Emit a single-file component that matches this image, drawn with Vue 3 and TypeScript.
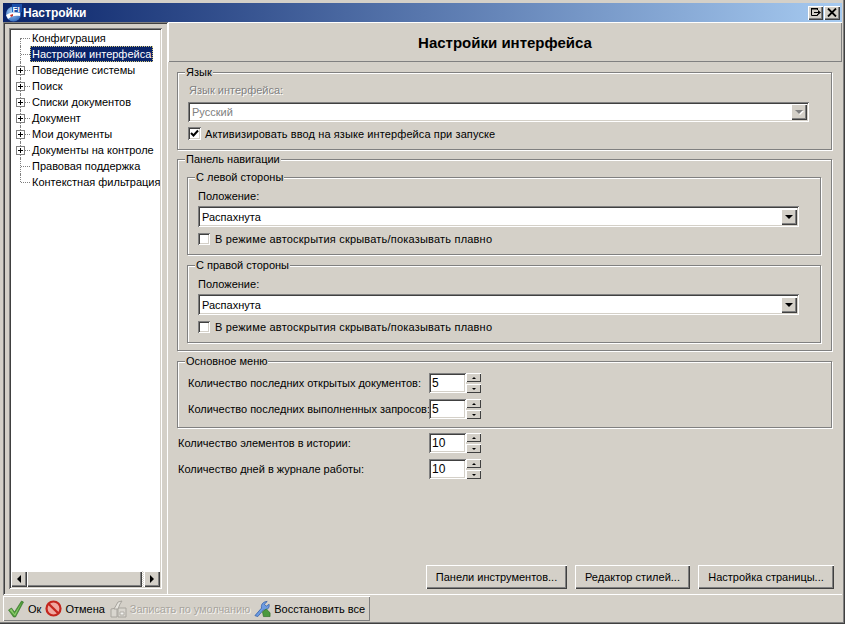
<script setup lang="ts">
interface TreeItem {
	label: string;
	expandable?: boolean;
	selected?: boolean;
}

const treeItems: TreeItem[] = [
	{ label: "Конфигурация" },
	{ label: "Настройки интерфейса", selected: true },
	{ label: "Поведение системы", expandable: true },
	{ label: "Поиск", expandable: true },
	{ label: "Списки документов", expandable: true },
	{ label: "Документ", expandable: true },
	{ label: "Мои документы", expandable: true },
	{ label: "Документы на контроле", expandable: true },
	{ label: "Правовая поддержка" },
	{ label: "Контекстная фильтрация" },
];

const navSides = ["С левой стороны", "С правой стороны"];

const menuRows = [
	{ label: "Количество последних открытых документов:", value: "5" },
	{ label: "Количество последних выполненных запросов:", value: "5" },
];

const plainRows = [
	{ label: "Количество элементов в истории:", value: "10" },
	{ label: "Количество дней в журнале работы:", value: "10" },
];

const actions = ["Панели инструментов...", "Редактор стилей...", "Настройка страницы..."];
</script>

<template>
	<div class="window">
		<div class="titlebar">
			<svg class="app-icon" width="17" height="18" viewBox="0 0 17 18">
				<defs>
					<radialGradient id="globe" cx="0.4" cy="0.35" r="0.75">
						<stop offset="0" stop-color="#a8d0f4" />
						<stop offset="1" stop-color="#2a62b8" />
					</radialGradient>
				</defs>
				<circle cx="8.5" cy="10" r="7.5" fill="url(#globe)" />
				<path d="M1 11 C5 8 10 8 15 9 L15 12 C10 11 6 12 3 15 Z" fill="#fff" />
				<path d="M5 11 L8 10 L8 12 L6 13 Z" fill="#c8342c" />
				<rect x="7" y="0" width="10" height="8" fill="#1b4fa8" />
				<text x="7.5" y="7.5" class="app-icon-text">FI</text>
			</svg>
			<span class="title-text">Настройки</span>
			<div class="caption-buttons">
				<button class="caption-btn">
					<svg width="10" height="9" viewBox="0 0 10 9">
						<path d="M0.5 0.5H6.5V2M0.5 0.5V7.5H6.5V6" fill="none" stroke="#000" />
						<path d="M0 0H7V1.5H0ZM3 4H7V2L10 4.5L7 7V5H3Z" fill="#000" />
					</svg>
				</button>
				<button class="caption-btn close">
					<svg width="10" height="9" viewBox="0 0 10 9">
						<path d="M1 0.5L9 8.5M9 0.5L1 8.5" stroke="#000" stroke-width="1.8" />
					</svg>
				</button>
			</div>
		</div>

		<div class="main">
			<aside class="nav-panel">
				<div class="tree-box">
					<ul class="tree">
						<li
							v-for="(item, i) in treeItems"
							:key="item.label"
							class="tree-row"
							:class="{ last: i === treeItems.length - 1, first: i === 0 }"
						>
							<span class="tree-stub"></span>
							<span v-if="item.expandable" class="tree-plus"></span>
							<span class="tree-label" :class="{ selected: item.selected }">{{ item.label }}</span>
						</li>
					</ul>
					<div class="hscroll">
						<button class="scroll-btn"><span class="arrow-left"></span></button>
						<div class="scroll-thumb"></div>
						<div class="scroll-track"></div>
						<button class="scroll-btn"><span class="arrow-right"></span></button>
					</div>
				</div>
			</aside>

			<section class="content">
				<header class="content-header">Настройки интерфейса</header>
				<div class="content-body">
					<div class="group lang-group">
						<span class="group-title">Язык</span>
						<div class="field-label disabled">Язык интерфейса:</div>
						<div class="combo lang-combo">
							<span class="combo-value disabled-value">Русский</span>
							<span class="combo-btn"><span class="arrow-down off"></span></span>
						</div>
						<label class="check-row lang-check">
							<span class="checkbox">
								<svg width="9" height="9" viewBox="0 0 9 9">
									<path d="M1 4L3.5 6.5L8 1.5" fill="none" stroke="#000" stroke-width="2" />
								</svg>
							</span>
							Активизировать ввод на языке интерфейса при запуске
						</label>
					</div>

					<div class="group nav-group">
						<span class="group-title">Панель навигации</span>
						<div v-for="side in navSides" :key="side" class="group side-group">
							<span class="group-title">{{ side }}</span>
							<div class="side-label">Положение:</div>
							<div class="combo side-combo">
								<span class="combo-value">Распахнута</span>
								<span class="combo-btn"><span class="arrow-down"></span></span>
							</div>
							<label class="check-row side-check">
								<span class="checkbox small"></span>
								В режиме автоскрытия скрывать/показывать плавно
							</label>
						</div>
					</div>

					<div class="group menu-group">
						<span class="group-title">Основное меню</span>
						<div v-for="row in menuRows" :key="row.label" class="spin-row">
							<span class="spin-label in-group">{{ row.label }}</span>
							<div class="spin-input">{{ row.value }}</div>
							<div class="spin-btns">
								<span class="spin-btn"><i class="tiny-up"></i></span>
								<span class="spin-btn"><i class="tiny-down"></i></span>
							</div>
						</div>
					</div>

					<div class="plain-rows">
						<div v-for="row in plainRows" :key="row.label" class="spin-row">
							<span class="spin-label">{{ row.label }}</span>
							<div class="spin-input">{{ row.value }}</div>
							<div class="spin-btns">
								<span class="spin-btn"><i class="tiny-up"></i></span>
								<span class="spin-btn"><i class="tiny-down"></i></span>
							</div>
						</div>
					</div>

					<div class="actions">
						<button v-for="a in actions" :key="a" class="action-btn">{{ a }}</button>
					</div>
				</div>
			</section>
		</div>

		<div class="statusbar">
			<div class="toolbar">
				<span class="tool">
					<svg width="18" height="18" viewBox="0 0 17 18">
						<path d="M1 10 L4 8 L7 12 L14 1 L16 2 L8 17 L6 17 Z" fill="#4f9a3a" stroke="#2f6d24" stroke-width="0.6" />
						<path d="M2 10 L4 9 L7 14 L14 3 L7.5 16 Z" fill="#8ccb6c" />
					</svg>
					Ок
				</span>
				<span class="tool">
					<svg width="17" height="17" viewBox="0 0 17 17">
						<circle cx="8.5" cy="8.5" r="7" fill="#f0a8a0" stroke="#c4261d" stroke-width="2.2" />
						<path d="M3.8 4 L13 13" stroke="#c4261d" stroke-width="2.4" />
					</svg>
					Отмена
				</span>
				<span class="tool off">
					<svg width="17" height="18" viewBox="0 0 17 18">
						<path d="M1 17V9L7 8V17Z M8 8H16V17H8Z" fill="#d9d6cf" stroke="#a8a59e" />
						<path d="M4 9L8 2L12 1L10 4L8 9Z" fill="#e6e4de" stroke="#a8a59e" />
						<path d="M10 12H14V15H10Z" fill="#f4f3f0" stroke="#b0ada6" />
					</svg>
					Записать по умолчанию
				</span>
				<span class="tool">
					<svg width="17" height="18" viewBox="0 0 18 18">
						<path d="M1 16L8 8C7 4 10 1 14 1L11 4L13 6L16 4C17 8 13 11 10 10L4 17Z" fill="#6c9be0" stroke="#2d5aa8" stroke-width="0.8" />
						<path d="M9 12L13 9L17 13L17 17L10 17Z" fill="#4c9a3f" stroke="#2f6d24" stroke-width="0.7" />
					</svg>
					Восстановить все
				</span>
			</div>
		</div>
	</div>
</template>

<style scoped>
* {
	box-sizing: border-box;
}

.window {
	width: 845px;
	height: 624px;
	padding: 3px 3px 2px 3px;
	display: flex;
	flex-direction: column;
	background: #d4d0c8;
	color: #000;
	font-family: "Liberation Sans", Arial, sans-serif;
	font-size: 11px;
	box-shadow: inset -1px -1px 0 #404040, inset -2px -2px 0 #808080;
	overflow: hidden;
}

.titlebar {
	height: 19px;
	flex: none;
	display: flex;
	align-items: center;
	padding: 0 2px 0 2px;
	background: linear-gradient(90deg, #0a246a, #a6caf0);
	color: #fff;
}

.app-icon {
	flex: none;
}

.app-icon-text {
	font-family: "Liberation Sans", Arial, sans-serif;
	font-size: 8px;
	font-weight: 700;
	fill: #fff;
}

.title-text {
	margin-left: 1px;
	font-size: 12px;
	font-weight: 700;
}

.caption-buttons {
	margin-left: auto;
	display: flex;
	gap: 1px;
}

.caption-btn {
	width: 15px;
	height: 14px;
	padding: 0;
	border: none;
	display: flex;
	align-items: center;
	justify-content: center;
	background: #d4d0c8;
	box-shadow: inset 1px 1px 0 #fff, inset -1px -1px 0 #404040, inset -2px -2px 0 #808080;
}

.caption-btn.close {
	width: 16px;
}

.main {
	flex: 1;
	display: flex;
	min-height: 0;
}

.nav-panel {
	width: 165px;
	flex: none;
	padding: 6px;
	box-shadow: inset 1px 1px 0 #808080, inset -1px -1px 0 #fff, inset 2px 2px 0 #404040;
}

.tree-box {
	height: 100%;
	padding: 2px;
	display: flex;
	flex-direction: column;
	background: #fff;
	box-shadow: inset 1px 1px 0 #808080, inset -1px -1px 0 #fff, inset 2px 2px 0 #404040, inset -2px -2px 0 #d4d0c8;
	overflow: hidden;
}

.tree {
	flex: 1;
	list-style: none;
	margin: 0;
	padding: 0;
	overflow: hidden;
}

.tree-row {
	position: relative;
	height: 16px;
	white-space: nowrap;
}

.tree-row::before {
	content: "";
	position: absolute;
	left: 9px;
	top: 0;
	bottom: 0;
	border-left: 1px dotted #808080;
}

.tree-row.first::before {
	top: 8px;
}

.tree-row.last::before {
	bottom: 8px;
}

.tree-stub {
	position: absolute;
	left: 10px;
	top: 8px;
	width: 9px;
	border-top: 1px dotted #808080;
}

.tree-plus {
	position: absolute;
	left: 5px;
	top: 4px;
	width: 9px;
	height: 9px;
	border: 1px solid #808080;
	background:
		linear-gradient(#000, #000) center / 5px 1px no-repeat,
		linear-gradient(#000, #000) center / 1px 5px no-repeat,
		#fff;
}

.tree-label {
	position: absolute;
	left: 19px;
	top: 0;
	height: 16px;
	line-height: 16px;
	padding: 0 2px;
}

.tree-label.selected {
	background: #0a246a;
	color: #fff;
	outline: 1px dotted #d4c878;
	outline-offset: -1px;
}

.hscroll {
	flex: none;
	height: 16px;
	display: flex;
}

.scroll-btn {
	width: 16px;
	height: 16px;
	padding: 0;
	border: none;
	flex: none;
	display: flex;
	align-items: center;
	justify-content: center;
	background: #d4d0c8;
	box-shadow: inset 1px 1px 0 #fff, inset -1px -1px 0 #404040, inset -2px -2px 0 #808080;
}

.arrow-left,
.arrow-right {
	width: 0;
	height: 0;
	border-top: 4px solid transparent;
	border-bottom: 4px solid transparent;
}

.arrow-left {
	border-right: 4px solid #000;
}

.arrow-right {
	border-left: 4px solid #000;
}

.scroll-thumb {
	flex: 1;
	background: #d4d0c8;
	box-shadow: inset 1px 1px 0 #fff, inset -1px -1px 0 #404040, inset -2px -2px 0 #808080;
}

.scroll-track {
	width: 2px;
	flex: none;
	background: repeating-conic-gradient(#fff 0 25%, #d4d0c8 0 50%) 0 0 / 2px 2px;
}

.content {
	flex: 1;
	min-width: 0;
	display: flex;
	flex-direction: column;
}

.content-header {
	height: 40px;
	flex: none;
	display: flex;
	align-items: center;
	justify-content: center;
	font-size: 15px;
	font-weight: 700;
	box-shadow: inset 1px 1px 0 #fff, inset -1px -1px 0 #808080;
}

.content-body {
	flex: 1;
	min-height: 0;
	padding: 10px 10px 5px 9px;
	display: flex;
	flex-direction: column;
	border-bottom: 1px solid #fff;
}

.group {
	position: relative;
	border: 1px solid #808080;
	box-shadow: 1px 1px 0 #fff, inset 1px 1px 0 #fff;
}

.group-title {
	position: absolute;
	top: -7px;
	left: 7px;
	padding: 0 1px;
	line-height: 13px;
	background: #d4d0c8;
	white-space: nowrap;
}

.lang-group {
	height: 78px;
	padding: 11px 22px 0 10px;
}

.field-label.disabled {
	height: 18px;
	line-height: 13px;
	padding-left: 1px;
	color: #808080;
	text-shadow: 1px 1px 0 #fff;
}

.combo {
	height: 20px;
	display: flex;
	align-items: center;
	background: #fff;
	box-shadow: inset 1px 1px 0 #808080, inset -1px -1px 0 #fff, inset 2px 2px 0 #404040, inset -2px -2px 0 #d4d0c8;
	padding: 2px;
}

.combo-value {
	flex: 1;
	padding-left: 2px;
}

.disabled-value {
	color: #808080;
}

.combo-btn {
	width: 16px;
	height: 16px;
	flex: none;
	display: flex;
	align-items: center;
	justify-content: center;
	background: #d4d0c8;
	box-shadow: inset 1px 1px 0 #fff, inset -1px -1px 0 #404040, inset -2px -2px 0 #808080;
}

.arrow-down {
	width: 0;
	height: 0;
	border-left: 4px solid transparent;
	border-right: 4px solid transparent;
	border-top: 4px solid #000;
}

.arrow-down.off {
	border-top-color: #808080;
	filter: drop-shadow(1px 1px 0 #fff);
}

.check-row {
	display: flex;
	align-items: center;
	white-space: nowrap;
}

.lang-check {
	margin-top: 5px;
	gap: 4px;
	letter-spacing: 0.1px;
}

.side-check {
	margin-top: 6px;
	gap: 5px;
	letter-spacing: 0.2px;
}

.checkbox {
	width: 13px;
	height: 13px;
	flex: none;
	display: flex;
	align-items: center;
	justify-content: center;
	background: #fff;
	box-shadow: inset 1px 1px 0 #808080, inset -1px -1px 0 #fff, inset 2px 2px 0 #404040, inset -2px -2px 0 #d4d0c8;
}

.checkbox.small {
	width: 12px;
	height: 12px;
}

.nav-group {
	margin-top: 9px;
	height: 192px;
	padding: 17px 10px 0 9px;
	display: flex;
	flex-direction: column;
	gap: 10px;
}

.side-group {
	height: 78px;
	padding: 12px 21px 0 10px;
}

.side-label {
	height: 16px;
	line-height: 13px;
}

.side-combo {
	height: 21px;
}

.menu-group {
	margin-top: 10px;
	height: 67px;
	padding: 11px 0 0 10px;
	display: flex;
	flex-direction: column;
	gap: 6px;
}

.plain-rows {
	margin-top: 5px;
	padding-left: 1px;
	display: flex;
	flex-direction: column;
	gap: 6px;
}

.spin-row {
	display: flex;
	height: 20px;
	align-items: center;
}

.spin-label {
	width: 251px;
	flex: none;
	white-space: nowrap;
}

.spin-label.in-group {
	width: 241px;
}

.spin-input {
	width: 37px;
	height: 20px;
	flex: none;
	padding: 3px 0 0 3px;
	font-size: 12px;
	line-height: 14px;
	background: #fff;
	box-shadow: inset 1px 1px 0 #808080, inset -1px -1px 0 #fff, inset 2px 2px 0 #404040, inset -2px -2px 0 #d4d0c8;
}

.spin-btns {
	width: 15px;
	height: 20px;
	flex: none;
	display: flex;
	flex-direction: column;
	justify-content: space-between;
}

.spin-btn {
	height: 9px;
	display: flex;
	align-items: center;
	justify-content: center;
	background: #d4d0c8;
	box-shadow: inset 1px 1px 0 #fff, inset -1px -1px 0 #404040;
}

.tiny-up,
.tiny-down {
	width: 0;
	height: 0;
	border-left: 2px solid transparent;
	border-right: 2px solid transparent;
}

.tiny-up {
	border-bottom: 2px solid #000;
}

.tiny-down {
	border-top: 2px solid #000;
}

.actions {
	margin-top: auto;
	margin-right: -2px;
	display: flex;
	justify-content: flex-end;
	gap: 8px;
}

.action-btn {
	height: 24px;
	padding: 0;
	border: none;
	font: inherit;
	color: #000;
	white-space: nowrap;
	background: #d4d0c8;
	box-shadow: inset 1px 1px 0 #fff, inset -1px -1px 0 #404040, inset -2px -2px 0 #808080;
}

.action-btn:nth-child(1) {
	width: 141px;
}

.action-btn:nth-child(2) {
	width: 115px;
}

.action-btn:nth-child(3) {
	width: 136px;
}

.statusbar {
	height: 27px;
	flex: none;
	padding-top: 1px;
}

.toolbar {
	width: 367px;
	height: 25px;
	display: flex;
	align-items: center;
	gap: 4px;
	padding: 0 4px;
	box-shadow: inset 1px 1px 0 #fff, inset -1px -1px 0 #808080;
}

.tool {
	display: flex;
	align-items: center;
	gap: 3px;
	white-space: nowrap;
}

.tool.off {
	margin-left: 1px;
	color: #a8a59e;
	letter-spacing: -0.1px;
	text-shadow: 1px 1px 0 #f4f3f0;
}
</style>

<style>
html,
body {
	margin: 0;
	background: #d4d0c8;
	overflow: hidden;
}
</style>
